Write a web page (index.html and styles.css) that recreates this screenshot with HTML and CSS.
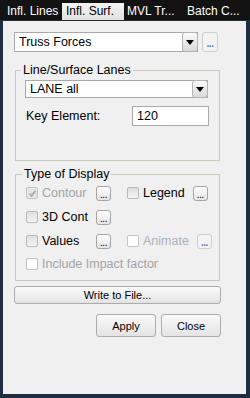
FILE: index.html
```html
<!DOCTYPE html>
<html lang="en">
<head>
    <meta charset="UTF-8">
    <title>Influence Surface</title>
    <link rel="stylesheet" href="styles.css">
</head>
<body>

<div class="tabs">
    <div class="tab tab-lines">Infl. Lines</div>
    <div class="tab tab-surf active">Infl. Surf.</div>
    <div class="tab tab-mvl">MVL Tr...</div>
    <div class="tab tab-batch">Batch C...</div>
</div>

<div class="panel">
    <!-- Result type -->
    <div class="top-row">
        <div class="combo combo-main">
            <span class="combo-text">Truss Forces</span>
            <span class="combo-btn"><span class="arrow"></span></span>
        </div>
        <button class="dots-btn disabled big">...</button>
    </div>

    <!-- Lanes -->
    <div class="group group-lanes">
        <div class="group-title">Line/Surface Lanes</div>
        <div class="combo combo-lane">
            <span class="combo-text">LANE all</span>
            <span class="combo-btn"><span class="arrow"></span></span>
        </div>
        <div class="key-row">
            <span class="key-label">Key Element:</span>
            <div class="text-input">120</div>
        </div>
    </div>

    <!-- Display type -->
    <div class="group group-display">
        <div class="group-title">Type of Display</div>

        <div class="opt-row">
            <div class="cell">
                <span class="check checked disabled-check">
                    <svg width="9" height="9" viewBox="0 0 9 9"><polyline points="1.5,4.5 3.5,6.8 7.5,1.8" fill="none" stroke="#a8a8a8" stroke-width="1.8"/></svg>
                </span>
                <span class="label muted">Contour</span>
            </div>
            <button class="dots-btn">...</button>
            <div class="cell right">
                <span class="check"></span>
                <span class="label">Legend</span>
                <button class="dots-btn">...</button>
            </div>
        </div>

        <div class="opt-row">
            <div class="cell">
                <span class="check"></span>
                <span class="label">3D Cont</span>
            </div>
            <button class="dots-btn">...</button>
        </div>

        <div class="opt-row">
            <div class="cell">
                <span class="check"></span>
                <span class="label">Values</span>
            </div>
            <button class="dots-btn">...</button>
            <div class="cell right">
                <span class="check white"></span>
                <span class="label faded">Animate</span>
                <button class="dots-btn disabled">...</button>
            </div>
        </div>

        <div class="opt-row last">
            <div class="cell wide">
                <span class="check white"></span>
                <span class="label muted">Include Impact factor</span>
            </div>
        </div>
    </div>

    <button class="push-btn write-btn">Write to File...</button>

    <div class="bottom-row">
        <button class="push-btn">Apply</button>
        <button class="push-btn">Close</button>
    </div>
</div>

</body>
</html>
```

FILE: styles.css
```css
/* General styles */
body {
    margin: 0;
    padding: 0;
    width: 250px;
    height: 398px;
    background-color: #1f2d42;
    font-family: "Liberation Sans", Arial, sans-serif;
    font-size: 12.5px;
    color: #000;
    overflow: hidden;
}

/* Tabs */
.tabs {
    display: flex;
    height: 20px;
    background-color: #131313;
    padding-left: 3px;
}

.tab {
    flex-shrink: 0;
    color: #fff;
    font-size: 12px;
    line-height: 17px;
    padding: 0 4px;
    margin-top: 3px;
    white-space: nowrap;
}

.tab-lines { width: 51px; }
.tab-surf { width: 54px; }
.tab-mvl { width: 52px; padding-left: 3px; }
.tab-batch { width: 56px; }

.tab.active {
    background: linear-gradient(#f4f4f4, #e2e2e2);
    color: #000;
}

/* Panel */
.panel {
    margin: 1px 4px 0 3px;
    height: 362px;
    padding: 11px 25px 0 11px;
    background-color: #f0f0f0;
}

.top-row {
    display: flex;
    align-items: center;
    gap: 4px;
}

/* Combo boxes */
.combo {
    display: flex;
    align-items: center;
    box-sizing: border-box;
    background-color: #fff;
    border: 1px solid #a9a9a9;
}

.combo-main {
    width: 184px;
    height: 20px;
}

.combo-lane {
    width: 183px;
    height: 18px;
    margin-top: 3px;
}

.combo-text {
    flex: 1;
    padding-left: 4px;
    white-space: nowrap;
}

.combo-btn {
    display: flex;
    align-items: center;
    justify-content: center;
    width: 16px;
    align-self: stretch;
    box-sizing: border-box;
    border: 1px solid #b4b4b4;
    border-radius: 3px;
    margin: -1px -1px -1px 0;
    background: linear-gradient(#fbfbfb, #d9d9d9);
}

.arrow {
    width: 0;
    height: 0;
    border-left: 4px solid transparent;
    border-right: 4px solid transparent;
    border-top: 5px solid #000;
    margin-top: 1px;
}

/* Small "..." buttons */
.dots-btn {
    flex-shrink: 0;
    box-sizing: border-box;
    width: 15px;
    height: 15px;
    padding: 0;
    border: 1px solid #a5a5a5;
    border-radius: 3px;
    background: linear-gradient(#fdfdfd, #e4e4e4);
    font-family: "Liberation Sans", Arial, sans-serif;
    font-size: 10px;
    line-height: 15px;
    color: #000;
    letter-spacing: -0.5px;
}

.dots-btn.disabled {
    border-color: #cfcfcf;
    background: #f3f3f3;
    color: #5a78c8;
    font-weight: bold;
}

.dots-btn.big {
    width: 16px;
    height: 20px;
    line-height: 22px;
}

/* Group boxes */
.group {
    box-sizing: border-box;
    width: 205px;
    margin-left: 1px;
    border: 1px solid #cbc7bb;
    padding: 0 10px 0 9px;
}

.group-lanes {
    height: 91px;
    margin-top: 18px;
}

.group-display {
    height: 107px;
    margin-top: 13px;
    padding-left: 10px;
}

.group-title {
    width: max-content;
    margin: -8px 0 0 -4px;
    padding: 0 2px;
    line-height: 14px;
    background-color: #f0f0f0;
}

.key-row {
    display: flex;
    align-items: center;
    margin-top: 8px;
}

.key-label {
    width: 106px;
    padding-left: 1px;
}

.text-input {
    box-sizing: border-box;
    width: 77px;
    height: 20px;
    border: 1px solid #a9a9a9;
    background-color: #fff;
    padding-left: 4px;
    line-height: 18px;
}

/* Option rows */
.opt-row {
    display: flex;
    align-items: center;
    height: 24px;
}

.opt-row.last {
    height: 22px;
}

.cell {
    display: flex;
    align-items: center;
    flex-shrink: 0;
    width: 70px;
    white-space: nowrap;
}

.cell.right,
.cell.wide {
    width: auto;
}

.cell.right {
    margin-left: 16px;
}

.cell.right .dots-btn {
    margin-left: 8px;
}

.check {
    display: flex;
    align-items: center;
    justify-content: center;
    flex-shrink: 0;
    box-sizing: border-box;
    width: 12px;
    height: 12px;
    border: 1px solid #b9b9b9;
    border-radius: 2px;
    background: linear-gradient(#dedede, #f4f4f4);
    margin-right: 4px;
}

.check.white {
    background: #fff;
    border-color: #c4c4c4;
}

.check.disabled-check {
    background: #e6e6e6;
    border-color: #c4c4c4;
}

.label.muted {
    color: #a3a3a3;
}

.label.faded {
    color: #abb1bb;
}

/* Push buttons */
.push-btn {
    box-sizing: border-box;
    border: 1px solid #acacac;
    border-radius: 3px;
    background: linear-gradient(#fafafa, #e3e3e3);
    font-family: "Liberation Sans", Arial, sans-serif;
    font-size: 11px;
    color: #000;
    padding: 0;
}

.write-btn {
    display: block;
    width: 207px;
    height: 18px;
    margin-top: 5px;
}

.bottom-row {
    display: flex;
    justify-content: flex-end;
    gap: 5px;
    margin-top: 10px;
}

.bottom-row .push-btn {
    width: 60px;
    height: 23px;
}
```
